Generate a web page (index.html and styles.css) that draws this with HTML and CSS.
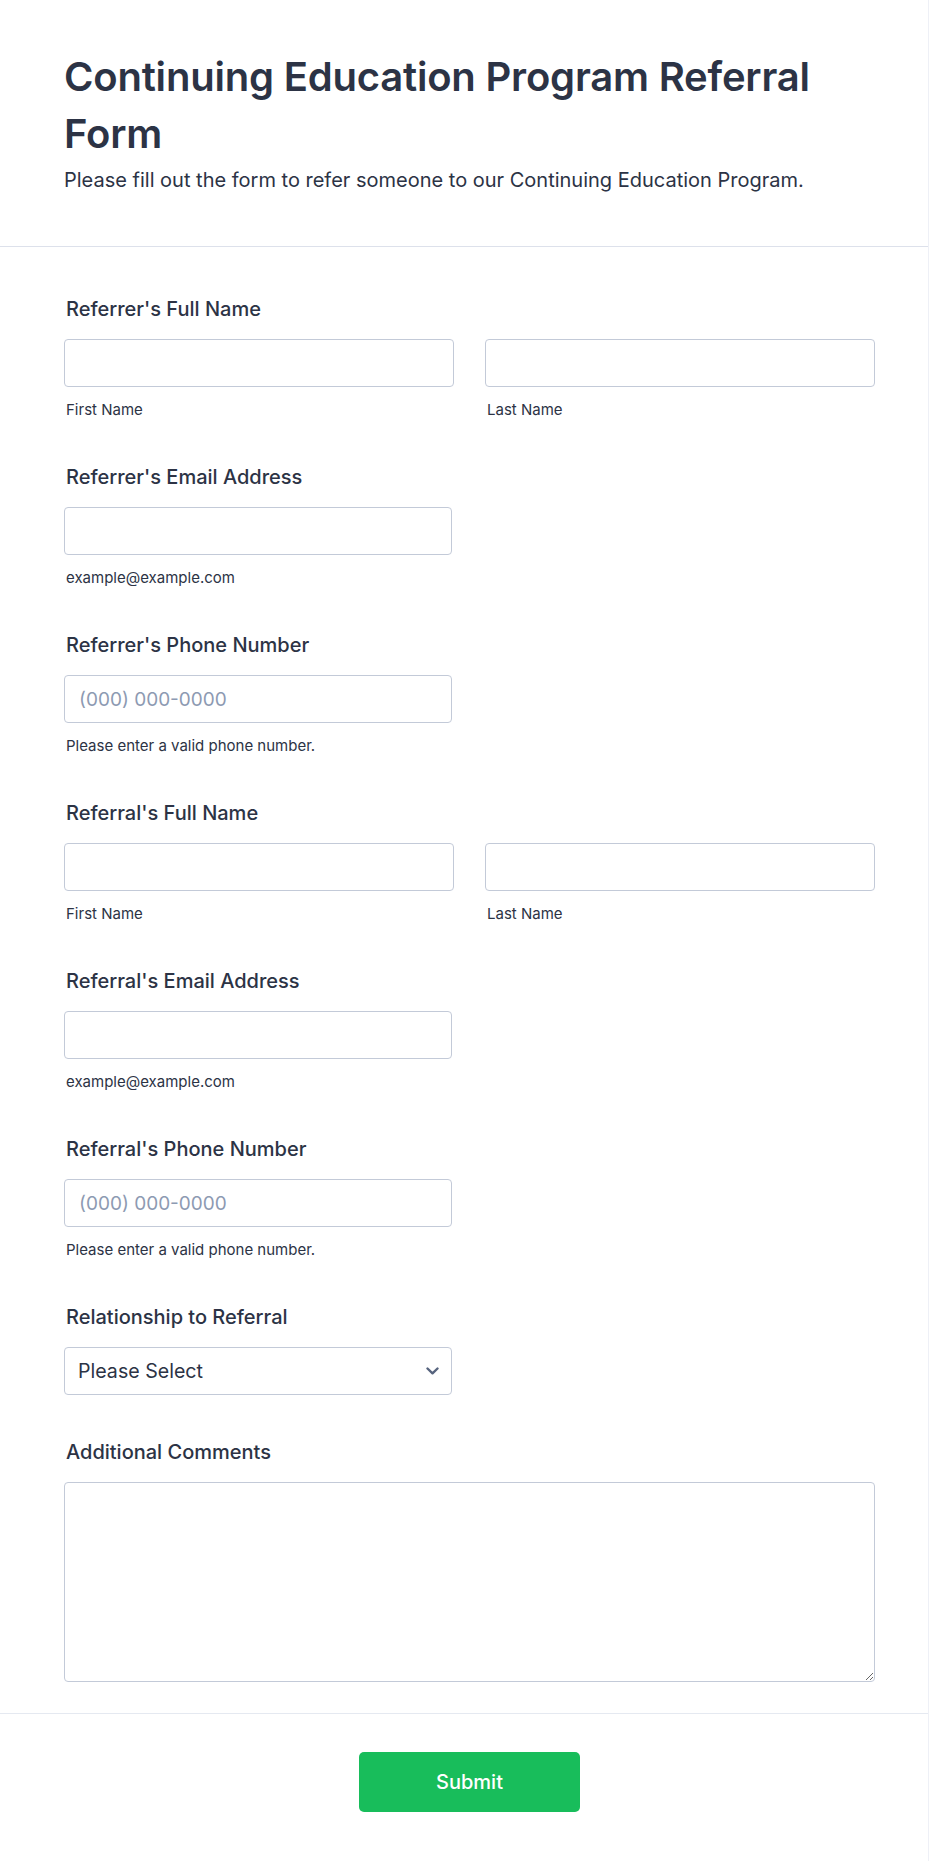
FILE: index.html
```html
<!DOCTYPE html>
<html lang="en">
<head>
<meta charset="utf-8">
<title>Continuing Education Program Referral Form</title>
<link rel="stylesheet" href="styles.css">
</head>
<body>
<div class="page">
  <header class="header">
    <h1 class="title">Continuing Education Program Referral Form</h1>
    <p class="subtitle">Please fill out the form to refer someone to our Continuing Education Program.</p>
  </header>
  <form class="form">
    <div class="field">
      <label class="label">Referrer's Full Name</label>
      <div class="name-row">
        <div class="col"><input class="input" type="text"><span class="sublabel">First Name</span></div>
        <div class="col"><input class="input" type="text"><span class="sublabel">Last Name</span></div>
      </div>
    </div>
    <div class="field">
      <label class="label">Referrer's Email Address</label>
      <div class="col single"><input class="input" type="email"><span class="sublabel">example@example.com</span></div>
    </div>
    <div class="field">
      <label class="label">Referrer's Phone Number</label>
      <div class="col single"><input class="input" type="tel" placeholder="(000) 000-0000"><span class="sublabel">Please enter a valid phone number.</span></div>
    </div>
    <div class="field">
      <label class="label">Referral's Full Name</label>
      <div class="name-row">
        <div class="col"><input class="input" type="text"><span class="sublabel">First Name</span></div>
        <div class="col"><input class="input" type="text"><span class="sublabel">Last Name</span></div>
      </div>
    </div>
    <div class="field">
      <label class="label">Referral's Email Address</label>
      <div class="col single"><input class="input" type="email"><span class="sublabel">example@example.com</span></div>
    </div>
    <div class="field">
      <label class="label">Referral's Phone Number</label>
      <div class="col single"><input class="input" type="tel" placeholder="(000) 000-0000"><span class="sublabel">Please enter a valid phone number.</span></div>
    </div>
    <div class="field">
      <label class="label">Relationship to Referral</label>
      <div class="select-wrap">
        <select class="select">
          <option>Please Select</option>
          <option>Colleague</option>
          <option>Friend</option>
          <option>Family Member</option>
          <option>Other</option>
        </select>
        <svg class="chevron" width="13" height="8" viewBox="0 0 13 8" aria-hidden="true"><path d="M1.5 1.5 L6.5 6.3 L11.5 1.5" fill="none" stroke="#57647e" stroke-width="2.4" stroke-linecap="round" stroke-linejoin="round"/></svg>
      </div>
    </div>
    <div class="field last">
      <label class="label">Additional Comments</label>
      <textarea class="textarea"></textarea>
    </div>
  </form>
  <footer class="footer">
    <button class="submit" type="button">Submit</button>
  </footer>
</div>
</body>
</html>
```
FILE: styles.css
```css
* { box-sizing: border-box; }
html, body { margin: 0; padding: 0; background: #ffffff; }
body {
  font-family: Inter, "Noto Sans", "Liberation Sans", sans-serif;
  color: #2c3345;
}
.page {
  width: 929px;
  border-right: 1px solid #eef0f6;
  min-height: 1861px;
}
.header {
  padding: 48px 40px 52px 64px;
  border-bottom: 1px solid #dde1eb;
}
.title {
  margin: 0;
  font-size: 40px;
  line-height: 57px;
  font-weight: 600;
  letter-spacing: -0.2px;
  color: #2c3345;
  max-width: 811px;
}
.subtitle {
  margin: 4px 0 0;
  font-size: 20px;
  line-height: 28px;
  color: #2c3345;
}
.form {
  padding: 48px 53px 31px 64px;
}
.field { margin-bottom: 43px; }
.field.last { margin-bottom: 0; }
.label {
  display: block;
  margin: 0 0 16px 2px;
  font-size: 20px;
  line-height: 28px;
  font-weight: 500;
  color: #2c3345;
}
.name-row {
  display: grid;
  grid-template-columns: 390px 390px;
  column-gap: 31px;
}
.col { display: flex; flex-direction: column; }
.col.single { width: 388px; }
.input, .select, .textarea {
  font-family: inherit;
  border: 1px solid #c3cad8;
  border-radius: 4px;
  background: #ffffff;
  color: #2c3345;
  outline: none;
}
.input {
  width: 100%;
  height: 48px;
  padding: 0 14px;
  font-size: 19px;
}
.input::placeholder { color: #8d9ab2; }
.sublabel {
  margin: 13px 0 0 2px;
  font-size: 15px;
  line-height: 20px;
  color: #2c3345;
}
.select-wrap {
  position: relative;
  width: 388px;
}
.select {
  display: block;
  width: 100%;
  height: 48px;
  padding: 0 40px 0 13px;
  font-size: 19.6px;
  appearance: none;
  -webkit-appearance: none;
}
.chevron {
  position: absolute;
  right: 13px;
  top: 20px;
  pointer-events: none;
}
.textarea {
  display: block;
  width: 811px;
  height: 200px;
  padding: 12px 14px;
  font-size: 18px;
}
.footer {
  border-top: 1px solid #e5e9f1;
  padding: 38px 53px 49px 64px;
  display: flex;
  justify-content: center;
}
.submit {
  width: 221px;
  height: 60px;
  border: none;
  border-radius: 5px;
  background: #18bd5b;
  color: #ffffff;
  font-family: inherit;
  font-size: 20px;
  font-weight: 500;
}
```
